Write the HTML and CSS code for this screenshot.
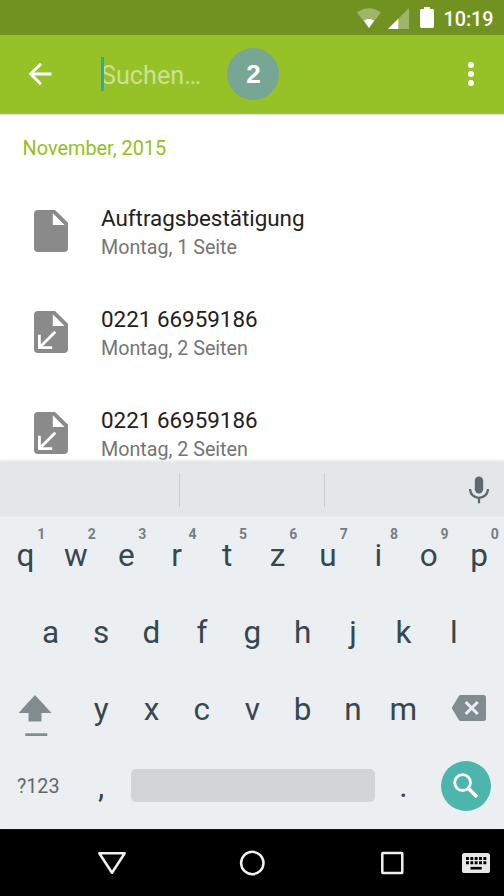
FILE: index.html
```html
<!DOCTYPE html>
<html lang="de">
<head>
<meta charset="utf-8">
<title>Suchen</title>
<link rel="stylesheet" href="styles.css">
</head>
<body>
<div class="phone">
  <header class="status">
    <svg class="wifi" width="24" height="20" viewBox="0 0 24 20"><path d="M0 4.6C7-1.2 17-1.2 24 4.6L12 20z" fill="#fff" fill-opacity=".33"/><path d="M7 12.8c3-2.4 7-2.4 10 0L12 20z" fill="#fff"/></svg>
    <svg class="signal" width="21" height="21" viewBox="0 0 21 21"><path d="M21 0v21H0z" fill="#fff" fill-opacity=".33"/><path d="M10.3 10.7V21H0z" fill="#fff"/></svg>
    <svg class="battery" width="14" height="21" viewBox="0 0 14 21"><path d="M4 0h6v2h2.6q1.4 0 1.4 1.4v16.2q0 1.4-1.4 1.4H1.4Q0 21 0 19.600V3.400Q0 2 1.400 2H4z" fill="#fff"/></svg>
    <span class="clock">10:19</span>
  </header>
  <div class="appbar">
    <svg class="back" width="24" height="24" viewBox="0 0 24 24"><path d="M23.500 12H3M13 1.700L2.700 12 13 22.300" fill="none" stroke="#fff" stroke-width="2.900"/></svg>
    <div class="search"><i class="caret"></i><span>Suchen…</span></div>
    <div class="step">2</div>
    <div class="more"><i></i><i></i><i></i></div>
  </div>
  <main class="list">
    <h2 class="month">November, 2015</h2>
    <div class="row">
      <svg class="doc" width="34" height="42" viewBox="0 0 34 42"><path d="M4 0H21L34 12.800V38a4 4 0 0 1-4 4H4a4 4 0 0 1-4-4V4a4 4 0 0 1 4-4z" fill="#8a8a8a"/><path d="M18.800 3.200V15H30.600z" fill="#fff"/></svg>
      <div class="text"><div class="title">Auftragsbestätigung</div><div class="sub">Montag, 1 Seite</div></div>
    </div>
    <div class="row">
      <svg class="doc" width="34" height="42" viewBox="0 0 34 42"><path d="M4 0H21L34 12.800V38a4 4 0 0 1-4 4H4a4 4 0 0 1-4-4V4a4 4 0 0 1 4-4z" fill="#8a8a8a"/><path d="M18.800 3.200V15H30.600z" fill="#fff"/><path d="M21.300 20.800L6 36M5.400 23.700V36.600H18.200" fill="none" stroke="#fff" stroke-width="2.800"/></svg>
      <div class="text"><div class="title">0221 66959186</div><div class="sub">Montag, 2 Seiten</div></div>
    </div>
    <div class="row">
      <svg class="doc" width="34" height="42" viewBox="0 0 34 42"><path d="M4 0H21L34 12.800V38a4 4 0 0 1-4 4H4a4 4 0 0 1-4-4V4a4 4 0 0 1 4-4z" fill="#8a8a8a"/><path d="M18.800 3.200V15H30.600z" fill="#fff"/><path d="M21.300 20.800L6 36M5.400 23.700V36.600H18.200" fill="none" stroke="#fff" stroke-width="2.800"/></svg>
      <div class="text"><div class="title">0221 66959186</div><div class="sub">Montag, 2 Seiten</div></div>
    </div>
  </main>
  <section class="keyboard">
    <div class="suggest">
      <div class="slot first"></div><div class="slot"></div>
      <div class="slot voice"><svg width="20" height="28" viewBox="0 0 20 28"><rect x="5.800" y="0.500" width="8.400" height="17" rx="4.200" fill="#5c696f"/><path d="M1.100 13v.5a8.900 8.300 0 0 0 17.800 0V13M10 22v5.300" fill="none" stroke="#5c696f" stroke-width="2.300"/></svg></div>
    </div>
    <div class="keys">
      <div class="key">q<sup>1</sup></div><div class="key">w<sup>2</sup></div><div class="key">e<sup>3</sup></div><div class="key">r<sup>4</sup></div><div class="key">t<sup>5</sup></div><div class="key">z<sup>6</sup></div><div class="key">u<sup>7</sup></div><div class="key">i<sup>8</sup></div><div class="key">o<sup>9</sup></div><div class="key">p<sup>0</sup></div>
    </div>
    <div class="keys middle">
      <div class="key">a</div><div class="key">s</div><div class="key">d</div><div class="key">f</div><div class="key">g</div><div class="key">h</div><div class="key">j</div><div class="key">k</div><div class="key">l</div>
    </div>
    <div class="keys">
      <div class="wide shift"><svg width="34" height="42" viewBox="0 0 34 42"><path d="M17 0L33.500 18H23.500V26.500H10.500V18H.5z" fill="#818c90"/><path d="M7.300 38.300h22v2.700h-22z" fill="#818c90"/></svg></div>
      <div class="key">y</div><div class="key">x</div><div class="key">c</div><div class="key">v</div><div class="key">b</div><div class="key">n</div><div class="key">m</div>
      <div class="wide delete"><svg width="34" height="26" viewBox="0 0 34 26"><path d="M9 0H31.500Q34 0 34 2.500V23.500Q34 26 31.500 26H9Q7.500 26 6.800 25L.4 14.300Q-.4 13 .4 11.700L6.800 1Q7.500 0 9 0z" fill="#818c90"/><path d="M13.700 7L25.700 19M25.700 7L13.700 19" stroke="#eceff1" stroke-width="3" fill="none"/></svg></div>
    </div>
    <div class="keys bottom">
      <div class="wide symbols">?123</div>
      <div class="key">,</div>
      <div class="space"><span></span></div>
      <div class="key">.</div>
      <div class="wide go"><div class="enter"><svg width="26" height="26" viewBox="0 0 26 26"><circle cx="9.600" cy="9.600" r="7.900" fill="none" stroke="#fff" stroke-width="2.800"/><path d="M15.200 15.200L24 24" stroke="#fff" stroke-width="3.600"/></svg></div></div>
    </div>
  </section>
  <nav class="nav">
    <svg width="30" height="24" viewBox="0 0 30 24"><path d="M2.300 2.200H27.700L15 21.800z" fill="none" stroke="#f0f0f0" stroke-width="2.500" stroke-linejoin="round"/></svg>
    <svg width="26" height="26" viewBox="0 0 26 26"><circle cx="13.300" cy="13" r="11.200" fill="none" stroke="#f0f0f0" stroke-width="2.500"/></svg>
    <svg width="24" height="24" viewBox="0 0 24 24"><rect x="2.300" y="2" width="20" height="20" rx=".4" fill="none" stroke="#f0f0f0" stroke-width="2.500"/></svg>
    <svg class="ime" width="28" height="20" viewBox="0 0 28 20"><rect width="28" height="20" rx="2.600" fill="#e8e8e8"/><path d="M4 5.500H24.300M4 9.800H24.300" stroke="#000" stroke-width="2.900" stroke-dasharray="2.900 1.450"/><path d="M8.500 15.200H19.700" stroke="#000" stroke-width="2.600"/></svg>
  </nav>
</div>
</body>
</html>
```
FILE: styles.css
```css
* { box-sizing: border-box; }
body { margin: 0; background: #fff; font-family: Roboto, sans-serif; }
svg { display: block; flex: none; }
.phone { width: 504px; height: 896px; display: flex; flex-direction: column; overflow: hidden; }

.status { height: 35px; flex: none; background: #719120; display: flex; align-items: flex-start; padding: 7px 10px 0 356.500px; }
.wifi { margin: 1px 7px 0 0; }
.signal { margin: 1px 11px 0 0; }
.battery { margin-right: 9.900px; }
.clock { color: #fff; font-size: 19.8px; font-weight: 500; line-height: 22px; white-space: nowrap; margin-top: 2px; }

.appbar { height: 79px; flex: none; background: #96c228; border-bottom: 1px solid #a5bd68; box-shadow: 0 1px 1px #d9d9e2; display: flex; align-items: center; padding: 0 29px 0 28px; z-index: 1; }
.search { position: relative; display: flex; align-items: center; width: 126px; height: 36px; margin-left: 49px; color: #cbe196; font-size: 25.2px; line-height: 36px; padding-top: 3px; }
.caret { position: absolute; left: 0; top: 1px; width: 3px; height: 34px; background: #2ba9ae; }
.step { width: 52px; height: 52px; margin-top: -1px; border-radius: 50%; background: #77a794; color: #fff; font: bold 26px/52px "Liberation Sans", sans-serif; text-align: center; padding-left: 1px; }
.more { margin-left: auto; width: 8px; display: flex; flex-direction: column; align-items: center; gap: 2.6px; }
.more i { width: 6px; height: 6px; border-radius: 50%; background: #fff; }

.list { height: 347px; flex: none; overflow: hidden; background: #fff; }
.month { margin: 0; height: 66.600px; padding: 23px 0 0 22.500px; font-size: 19.9px; font-weight: 400; line-height: 24px; color: #93c022; }
.row { height: 100.800px; display: flex; align-items: center; padding-left: 34px; }
.text { margin-left: 33px; padding-top: 6px; }
.title { font-size: 22.4px; line-height: 28px; color: #212121; }
.sub { padding-top: 1px; font-size: 19.7px; line-height: 30px; color: #757575; }

.keyboard { height: 368px; flex: none; background: #eceff1; z-index: 1; box-shadow: 0 -1px 2px #e9e9e9; }
.suggest { height: 57px; background: #e3e7ea; border-top: 1px solid #e9ecee; border-bottom: 1px solid #f1f3f4; display: flex; align-items: center; }
.slot { width: 145px; height: 34px; border-right: 1px solid #c5cbce; }
.slot.first { width: 180px; }
.slot.voice { flex: 1; border: 0; display: flex; justify-content: flex-end; align-items: center; padding-right: 15px; }
.keys { height: 77px; display: flex; }
.middle { padding-left: 25.200px; }
.key { position: relative; width: 50.400px; flex: none; text-align: center; color: #37474f; font-size: 31.5px; line-height: 76px; padding-left: .6px; }
.key sup { position: absolute; right: 5px; top: 8px; font-size: 14px; line-height: 16px; font-weight: 700; color: #737f84; }
.wide { width: 75.600px; flex: none; display: flex; align-items: center; }
.shift { padding: 10px 0 0 18px; }
.delete { padding: 0 0 5px 24px; }
.symbols { padding: 0 0 3px 17px; font-size: 19.7px; color: #5c6a70; }
.space { width: 252px; display: flex; align-items: center; justify-content: center; padding-left: 1.400px; }
.space span { width: 244px; height: 33px; border-radius: 5px; background: #d1d5d8; margin-bottom: 4px; }
.go { justify-content: flex-end; padding-right: 12.600px; }
.enter { width: 50px; height: 50px; border-radius: 50%; background: #4db6ac; display: flex; align-items: center; justify-content: center; margin-bottom: 4px; }

.nav { height: 67px; flex: none; background: #000; display: flex; align-items: center; padding-left: 97.400px; }
.nav svg + svg { margin-left: 112px; }
.nav svg:nth-child(3) { margin-left: 115px; }
.nav svg.ime { margin-left: 57.600px; }
```
